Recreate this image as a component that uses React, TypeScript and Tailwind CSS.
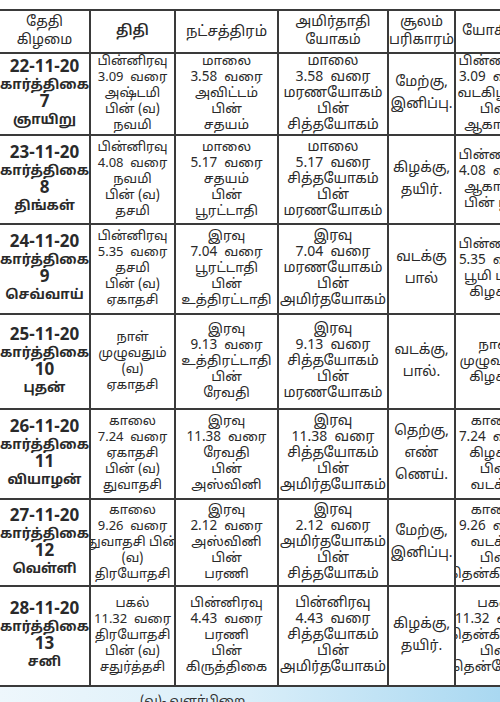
import React from "react";

type Row = {
  h: string;
  date: string;
  day: string;
  wd: string;
  thithi: string[];
  star: string[];
  yogam: string[];
  soolam: string[];
  yogini: string[];
};

const rows: Row[] = [
  {
    h: "h-[82px]",
    date: "22-11-20",
    day: "7",
    wd: "ஞாயிறு",
    thithi: ["பின்னிரவு", "3.09  வரை", "அஷ்டமி", "பின் (வ)", "நவமி"],
    star: ["மாலை", "3.58  வரை", "அவிட்டம்", "பின்", "சதயம்"],
    yogam: ["மாலை", "3.58  வரை", "மரணயோகம்", "பின்", "சித்தயோகம்"],
    soolam: ["மேற்கு,", "இனிப்பு."],
    yogini: ["பின்னிரவு", "3.09  வரை", "வடகிழக்கு", "பின்", "ஆகாயம்"],
  },
  {
    h: "h-[89px]",
    date: "23-11-20",
    day: "8",
    wd: "திங்கள்",
    thithi: ["பின்னிரவு", "4.08  வரை", "நவமி", "பின் (வ)", "தசமி"],
    star: ["மாலை", "5.17  வரை", "சதயம்", "பின்", "பூரட்டாதி"],
    yogam: ["மாலை", "5.17  வரை", "சித்தயோகம்", "பின்", "மரணயோகம்"],
    soolam: ["கிழக்கு,", "தயிர்."],
    yogini: ["பின்னிரவு", "4.08  வரை", "ஆகாயம்", "பின் பூமி"],
  },
  {
    h: "h-[90px]",
    date: "24-11-20",
    day: "9",
    wd: "செவ்வாய்",
    thithi: ["பின்னிரவு", "5.35  வரை", "தசமி", "பின் (வ)", "ஏகாதசி"],
    star: ["இரவு", "7.04  வரை", "பூரட்டாதி", "பின்", "உத்திரட்டாதி"],
    yogam: ["இரவு", "7.04  வரை", "மரணயோகம்", "பின்", "அமிர்தயோகம்"],
    soolam: ["வடக்கு", "பால்"],
    yogini: ["பின்னிரவு", "5.35  வரை", "பூமி பின்", "கிழக்கு"],
  },
  {
    h: "h-[95px]",
    date: "25-11-20",
    day: "10",
    wd: "புதன்",
    thithi: ["நாள்", "முழுவதும்", "(வ)", "ஏகாதசி"],
    star: ["இரவு", "9.13  வரை", "உத்திரட்டாதி", "பின்", "ரேவதி"],
    yogam: ["இரவு", "9.13  வரை", "சித்தயோகம்", "பின்", "மரணயோகம்"],
    soolam: ["வடக்கு,", "பால்."],
    yogini: ["நாள்", "முழுவதும்", "கிழக்கு"],
  },
  {
    h: "h-[90px]",
    date: "26-11-20",
    day: "11",
    wd: "வியாழன்",
    thithi: ["காலை", "7.24  வரை", "ஏகாதசி", "பின் (வ)", "துவாதசி"],
    star: ["இரவு", "11.38  வரை", "ரேவதி", "பின்", "அஸ்வினி"],
    yogam: ["இரவு", "11.38  வரை", "சித்தயோகம்", "பின்", "அமிர்தயோகம்"],
    soolam: ["தெற்கு,", "எண்", "ணெய்."],
    yogini: ["காலை", "7.24  வரை", "கிழக்கு", "பின்", "வடக்கு"],
  },
  {
    h: "h-[87px]",
    date: "27-11-20",
    day: "12",
    wd: "வெள்ளி",
    thithi: ["காலை", "9.26  வரை", "துவாதசி பின்", "(வ)", "திரயோதசி"],
    star: ["இரவு", "2.12  வரை", "அஸ்வினி", "பின்", "பரணி"],
    yogam: ["இரவு", "2.12  வரை", "அமிர்தயோகம்", "பின்", "சித்தயோகம்"],
    soolam: ["மேற்கு,", "இனிப்பு."],
    yogini: ["காலை", "9.26  வரை", "வடக்கு", "பின்", "தென்கிழக்கு"],
  },
  {
    h: "h-[100px]",
    date: "28-11-20",
    day: "13",
    wd: "சனி",
    thithi: ["பகல்", "11.32  வரை", "திரயோதசி", "பின் (வ)", "சதுர்த்தசி"],
    star: ["பின்னிரவு", "4.43  வரை", "பரணி", "பின்", "கிருத்திகை"],
    yogam: ["பின்னிரவு", "4.43  வரை", "சித்தயோகம்", "பின்", "அமிர்தயோகம்"],
    soolam: ["கிழக்கு,", "தயிர்."],
    yogini: ["பகல்", "11.32  வரை", "தென்கிழக்கு", "பின்", "தென்மேற்கு"],
  },
];

const font = {
  fontFamily:
    '"Noto Sans Tamil", "Lohit Tamil", "Latha", "Liberation Sans", "DejaVu Sans", sans-serif',
};

function Lines({ items }: { items: string[] }) {
  return (
    <div className="flex flex-col items-center">
      {items.map((t, i) => (
        <span key={i} className="whitespace-pre">
          {t}
        </span>
      ))}
    </div>
  );
}

const cell =
  "border-2 border-[#3a3a3a] text-center align-middle leading-[16px] text-[#2a2a2a] px-0 overflow-hidden";

export default function App() {
  return (
    <div className="w-[500px] h-[702px] overflow-hidden bg-white" style={font}>
      <div className="pt-[9px]">
        <table className="table-fixed border-collapse w-[560px] -ml-[2px]">
          <colgroup>
            <col className="w-[91px]" />
            <col className="w-[85px]" />
            <col className="w-[103px]" />
            <col className="w-[110px]" />
            <col className="w-[67px]" />
            <col className="w-[104px]" />
          </colgroup>
          <thead>
            <tr className="h-[43px]">
              <th className={cell + " font-normal text-[14px] leading-[18px]"}>
                <Lines items={["தேதி", "கிழமை"]} />
              </th>
              <th className={cell + " font-semibold text-[14px]"}>திதி</th>
              <th className={cell + " font-normal text-[14.5px]"}>நட்சத்திரம்</th>
              <th className={cell + " font-normal text-[14px] leading-[18px]"}>
                <Lines items={["அமிர்தாதி", "யோகம்"]} />
              </th>
              <th className={cell + " font-normal text-[14px] leading-[18px]"}>
                <Lines items={["சூலம்", "பரிகாரம்"]} />
              </th>
              <th className={cell + " font-normal text-[14px] text-left pl-1.5"}>யோகினி</th>
            </tr>
          </thead>
          <tbody>
            {rows.map((r) => (
              <tr key={r.date} className={r.h}>
                <td className={cell + " font-bold"}>
                  <div className="flex flex-col items-center">
                    <span className="text-[17px] leading-[18px]">{r.date}</span>
                    <span className="text-[13.5px] leading-[17px]">கார்த்திகை</span>
                    <span className="text-[17px] leading-[18px]">{r.day}</span>
                    <span className="text-[13.5px] leading-[17px]">{r.wd}</span>
                  </div>
                </td>
                <td className={cell + " text-[13px]"}>
                  <Lines items={r.thithi} />
                </td>
                <td className={cell + " text-[13.5px]"}>
                  <Lines items={r.star} />
                </td>
                <td className={cell + " text-[14px]"}>
                  <Lines items={r.yogam} />
                </td>
                <td className={cell + " text-[14px] leading-[22px]"}>
                  <Lines items={r.soolam} />
                </td>
                <td className={cell + " text-[13.5px] text-left"}>
                  <div className="w-[78px] flex flex-col items-center">
                    {r.yogini.map((t, i) => (
                      <span key={i} className="whitespace-pre">
                        {t}
                      </span>
                    ))}
                  </div>
                </td>
              </tr>
            ))}
          </tbody>
        </table>
        <div className="h-[20px] bg-gradient-to-r from-[#eef7fc] via-[#d9eef9] to-[#a9d8f1] flex justify-start">
          <span className="text-[13px] leading-[16px] text-[#333] mt-[7px] ml-[140px]">
            (வ)- வளர்பிறை
          </span>
        </div>
      </div>
    </div>
  );
}
